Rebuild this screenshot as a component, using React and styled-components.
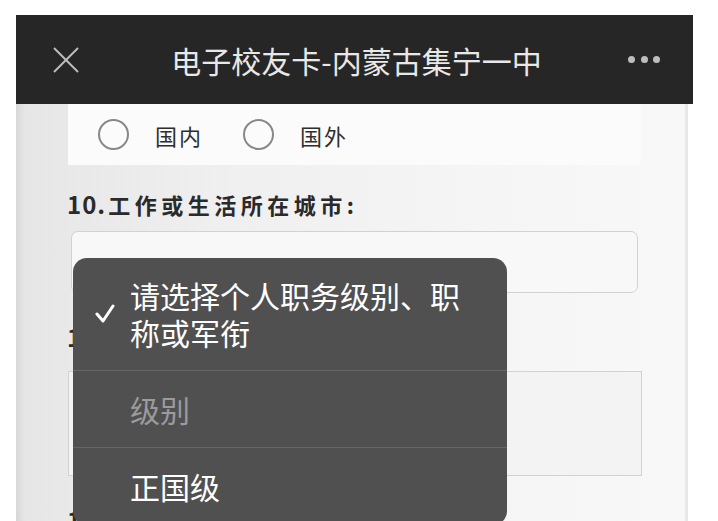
import styled, { createGlobalStyle } from "styled-components";

const Global = createGlobalStyle`
  html, body {
    margin: 0;
    padding: 0;
    background: #ffffff;
  }
  body {
    font-family: "Noto Sans CJK SC", "Noto Sans", sans-serif;
  }
`;

const Frame = styled.div`
  width: 677px;
  padding: 15px 0 0 16px;
`;

const Header = styled.div`
  height: 89px;
  background: #262626;
  display: grid;
  grid-template-columns: 1fr auto 1fr;
  align-items: center;
  padding: 0 33px 0 37px;
`;

const Title = styled.div`
  color: #e8e8e8;
  font-size: 30px;
  line-height: 40px;
  white-space: nowrap;
`;

const Dots = styled.div`
  display: flex;
  gap: 5.5px;
  justify-self: end;
`;

const Dot = styled.span`
  width: 7px;
  height: 7px;
  border-radius: 50%;
  background: #bdbdbd;
`;

const Body = styled.div`
  position: relative;
  width: 617px;
  height: 417px;
  overflow: hidden;
  padding-left: 52px;
  border-right: 3px solid #e8e8e8;
  background: linear-gradient(to right, #e6e6e6 0%, #efefef 30%, #f5f5f5 70%, #f8f8f8 100%);
  box-shadow: inset 9px 0 6px -5px rgba(0, 0, 0, 0.07);
`;

const RadioBox = styled.div`
  width: 543px;
  height: 61px;
  padding-left: 30px;
  background: #fbfbfb;
  display: flex;
  align-items: center;
`;

const Radio = styled.label`
  display: flex;
  align-items: center;
  gap: 26px;
  margin-right: 40px;
  color: #2e2e2e;
  font-size: 22px;
  letter-spacing: 2px;
`;

const Circle = styled.span`
  box-sizing: border-box;
  width: 31px;
  height: 31px;
  border-radius: 50%;
  border: 2px solid #888;
`;

const Label = styled.div`
  margin: ${(p) => p.$top}px 0 0 -1px;
  font-size: 22px;
  line-height: 30px;
  font-weight: 700;
  letter-spacing: 4.5px;
  color: #2a2a2a;
  white-space: nowrap;
`;

const Num = styled.span`
  font-size: 24px;
  letter-spacing: 1px;
  margin-right: 2px;
`;

const Field = styled.div`
  box-sizing: border-box;
  margin: ${(p) => p.$top}px 0 0 ${(p) => p.$left}px;
  width: ${(p) => p.$width}px;
  height: ${(p) => p.$height}px;
  border: 1px solid #d2d2d2;
  border-radius: ${(p) => p.$radius}px;
  background: ${(p) => p.$bg};
`;

const Menu = styled.div`
  position: absolute;
  left: 57px;
  top: 154px;
  width: 434px;
  border-radius: 14px;
  background: #505050;
  color: #ffffff;
`;

const Item = styled.div`
  position: relative;
  box-sizing: border-box;
  height: ${(p) => p.$height}px;
  padding-left: 57px;
  display: flex;
  align-items: center;
  font-size: 30px;
  line-height: 37px;
  color: ${(p) => (p.$muted ? "#9b9b9b" : "#ffffff")};
  border-bottom: ${(p) => (p.$last ? "none" : "1px solid #666666")};
`;

const ItemText = styled.div`
  width: 340px;
`;

const Check = styled.svg`
  position: absolute;
  left: 22px;
  top: 50%;
  margin-top: -10px;
`;

export default function App() {
  return (
    <>
      <Global />
      <Frame>
        <Header>
          <svg width="26" height="26" viewBox="0 0 26 26">
            <line x1="1" y1="1" x2="25" y2="25" stroke="#bdbdbd" strokeWidth="2" />
            <line x1="25" y1="1" x2="1" y2="25" stroke="#bdbdbd" strokeWidth="2" />
          </svg>
          <Title>电子校友卡-内蒙古集宁一中</Title>
          <Dots>
            <Dot />
            <Dot />
            <Dot />
          </Dots>
        </Header>
        <Body>
          <RadioBox>
            <Radio>
              <Circle />
              国内
            </Radio>
            <Radio>
              <Circle />
              国外
            </Radio>
          </RadioBox>
          <Label $top={24}>
            <Num>10.</Num>工作或生活所在城市:
          </Label>
          <Field $top={12} $left={3} $width={567} $height={62} $radius={7} $bg="#f8f8f8" />
          <Label $top={29}>
            <Num>11.</Num>个人职务级别:
          </Label>
          <Field $top={19} $left={0} $width={574} $height={105} $radius={0} $bg="#f3f3f3" />
          <Label $top={29}>
            <Num>12.</Num>工作单位:
          </Label>
          <Menu>
            <Item $height={113}>
              <Check width="20" height="20" viewBox="0 0 20 20">
                <polyline
                  points="2,10 8,17 18,2"
                  fill="none"
                  stroke="#ffffff"
                  strokeWidth="3"
                  strokeLinecap="round"
                  strokeLinejoin="round"
                />
              </Check>
              <ItemText>请选择个人职务级别、职称或军衔</ItemText>
            </Item>
            <Item $height={77} $muted>
              <ItemText>级别</ItemText>
            </Item>
            <Item $height={77} $last>
              <ItemText>正国级</ItemText>
            </Item>
          </Menu>
        </Body>
      </Frame>
    </>
  );
}
